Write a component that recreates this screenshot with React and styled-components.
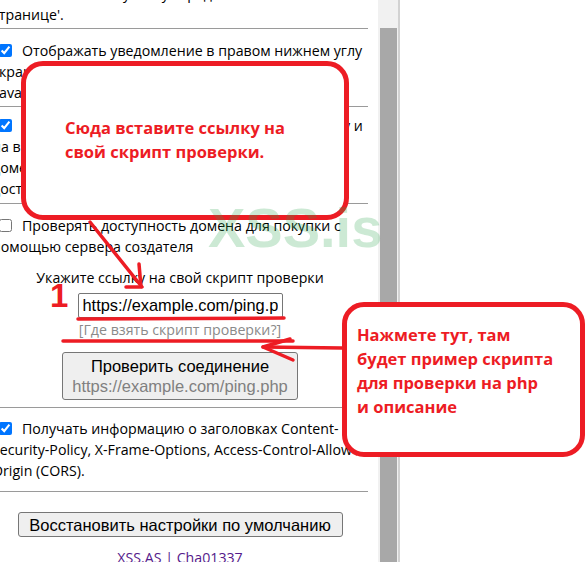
import styled, { createGlobalStyle } from 'styled-components';

const GlobalStyle = createGlobalStyle`
  html, body {
    margin: 0;
    padding: 0;
    background: #fff;
    overflow: hidden;
  }
`

const RED = '#ed1c24'

const Root = styled.div`
  position: relative;
  width: 588px;
  height: 562px;
  overflow: hidden;
  background: #fff;
  display: flex;
  font-family: "Open Sans", "Noto Sans", sans-serif;
  color: #000;
`

const Panel = styled.div`
  width: 378px;
  height: 100%;
  overflow: hidden;
`

const Page = styled.div`
  width: 376px;
  margin-left: -8px;
  margin-top: -17px;
`

const Section = styled.div`
  padding-top: ${p => p.$top}px;
  padding-bottom: ${p => p.$bottom}px;
  border-bottom: ${p => (p.$last ? 'none' : '1px solid #9a9a9a')};
`

const Text = styled.div`
  font-size: 14.2px;
  line-height: 21px;
  white-space: nowrap;
`

const Check = styled.input.attrs({ type: 'checkbox', readOnly: true })`
  width: 13px;
  height: 13px;
  margin: 3px 10px 3px 7px;
  accent-color: #0075ff;
  vertical-align: -1px;
`

const Center = styled.div`
  text-align: center;
  margin-top: ${p => p.$mt || 0}px;
  font-size: 14.2px;
  line-height: 21px;
  white-space: nowrap;
  color: ${p => p.$muted ? '#8a8a8a' : '#000'};
`

const UrlInput = styled.input`
  display: block;
  box-sizing: border-box;
  width: 205px;
  height: 25px;
  margin: 5px auto 0;
  padding: 1px 4px;
  border: 1px solid #767676;
  border-radius: 2px;
  font-family: "Liberation Sans", Arial, sans-serif;
  font-size: 16.4px;
  color: #000;
  background: #fff;
  outline: none;
`

const Button = styled.button`
  display: block;
  box-sizing: border-box;
  width: ${p => p.$w}px;
  height: ${p => p.$h}px;
  margin: ${p => p.$mt}px auto 0;
  padding: 0;
  border: 1px solid #767676;
  border-radius: 3px;
  background: #efefef;
  font-family: "Liberation Sans", Arial, sans-serif;
  font-size: 16.5px;
  line-height: 20px;
  color: #000;
  white-space: nowrap;
`

const Sub = styled.span`
  display: block;
  color: #808080;
`

const Footer = styled.div`
  margin-top: 10px;
  text-align: center;
  font-size: 14.2px;
  line-height: 21px;
  color: #551a8b;
`

const Track = styled.div`
  width: 20px;
  height: 100%;
  box-sizing: border-box;
  padding: 28px 1px 0 2px;
  background: #f1f1f1;
  display: flex;
  flex-direction: column;
`

const Thumb = styled.div`
  flex: 1;
  background: #a8a8a8;
`

const Edge = styled.div`
  width: 2px;
  height: 100%;
  background: #d2d2d2;
`

const Callout = styled.div`
  position: absolute;
  left: ${p => p.$x}px;
  top: ${p => p.$y}px;
  width: ${p => p.$w}px;
  height: ${p => p.$h}px;
  box-sizing: border-box;
  border: 5px solid ${RED};
  border-radius: 22px;
  background: #fff;
  padding: ${p => p.$pad};
  color: ${RED};
  font-family: "Open Sans", "Noto Sans", sans-serif;
  font-weight: 700;
  font-size: 16.5px;
  line-height: 24px;
  white-space: nowrap;
`

const Marker = styled.div`
  position: absolute;
  left: 50px;
  top: 279px;
  font-family: "Liberation Sans", Arial, sans-serif;
  font-weight: 700;
  font-size: 33px;
  line-height: 33px;
  color: ${RED};
`

const Watermark = styled.div`
  position: absolute;
  left: 208px;
  top: 200px;
  font-family: "Liberation Sans", Arial, sans-serif;
  font-weight: 700;
  font-size: 56px;
  line-height: 56px;
  color: rgba(40, 165, 75, 0.24);
  pointer-events: none;
`

const Strokes = styled.svg`
  position: absolute;
  left: 0;
  top: 0;
  pointer-events: none;
`

const Annotations = () => (
  <>
    <Strokes width="588" height="562" viewBox="0 0 588 562">
      <g stroke={RED} strokeWidth="3.5" strokeLinecap="round" strokeLinejoin="round" fill="none">
        <path d="M78 319 L284 318" />
        <path d="M63 341 L293 341" />
        <path d="M90 222 L142 287" />
        <path d="M139 264 L141 287 L126 287" />
        <path d="M342 348 L263 347" />
        <path d="M290 339 L263 347 L293 360" />
      </g>
    </Strokes>
    <Callout $x={21} $y={61} $w={328} $h={159} $pad="50px 0 0 39px">
      Сюда вставите ссылку на<br />
      свой скрипт проверки.
    </Callout>
    <Callout $x={342} $y={302} $w={243} $h={155} $pad="16px 0 0 10px">
      Нажмете тут, там<br />
      будет пример скрипта<br />
      для проверки на php<br />
      и описание
    </Callout>
    <Marker>1</Marker>
    <Watermark>XSS.is</Watermark>
  </>
)

export default function App() {
  return (
    <Root>
      <GlobalStyle />
      <Panel>
        <Page>
          <Section $top={0} $bottom={3}>
            <Text>'Показывать иконку статуса рядом со ссылками на</Text>
            <Text>странице'.</Text>
          </Section>

          <Section $top={11} $bottom={3}>
            <Text><Check defaultChecked />Отображать уведомление в правом нижнем углу</Text>
            <Text>экрана о найденных свободных доменах (статус</Text>
            <Text>«available»).</Text>
          </Section>

          <Section $top={8} $bottom={4}>
            <Text><Check defaultChecked />Проверять ссылки на открытой странице сразу и</Text>
            <Text>на вкладках, подсвечивать свободные</Text>
            <Text>домены и показывать сведения об их</Text>
            <Text>доступности для регистрации.</Text>
          </Section>

          <Section $top={11} $bottom={7}>
            <Text><Check />Проверять доступность домена для покупки с</Text>
            <Text>помощью сервера создателя</Text>
            <Center $mt={10}>Укажите ссылку на свой скрипт проверки</Center>
            <UrlInput defaultValue="https://example.com/ping.php" />
            <Center $mt={1} $muted>[Где взять скрипт проверки?]</Center>
            <Button $w={236} $h={48} $mt={12}>
              Проверить соединение
              <Sub>https://example.com/ping.php</Sub>
            </Button>
          </Section>

          <Section $top={10} $bottom={10}>
            <Text><Check defaultChecked />Получать информацию о заголовках Content-</Text>
            <Text>Security-Policy, X-Frame-Options, Access-Control-Allow-</Text>
            <Text>Origin (CORS).</Text>
          </Section>

          <Section $top={0} $bottom={0} $last>
            <Button $w={325} $h={25} $mt={20}>Восстановить настройки по умолчанию</Button>
            <Footer>XSS.AS | Cha01337</Footer>
          </Section>
        </Page>
      </Panel>
      <Track>
        <Thumb />
      </Track>
      <Edge />
      <Annotations />
    </Root>
  )
}
